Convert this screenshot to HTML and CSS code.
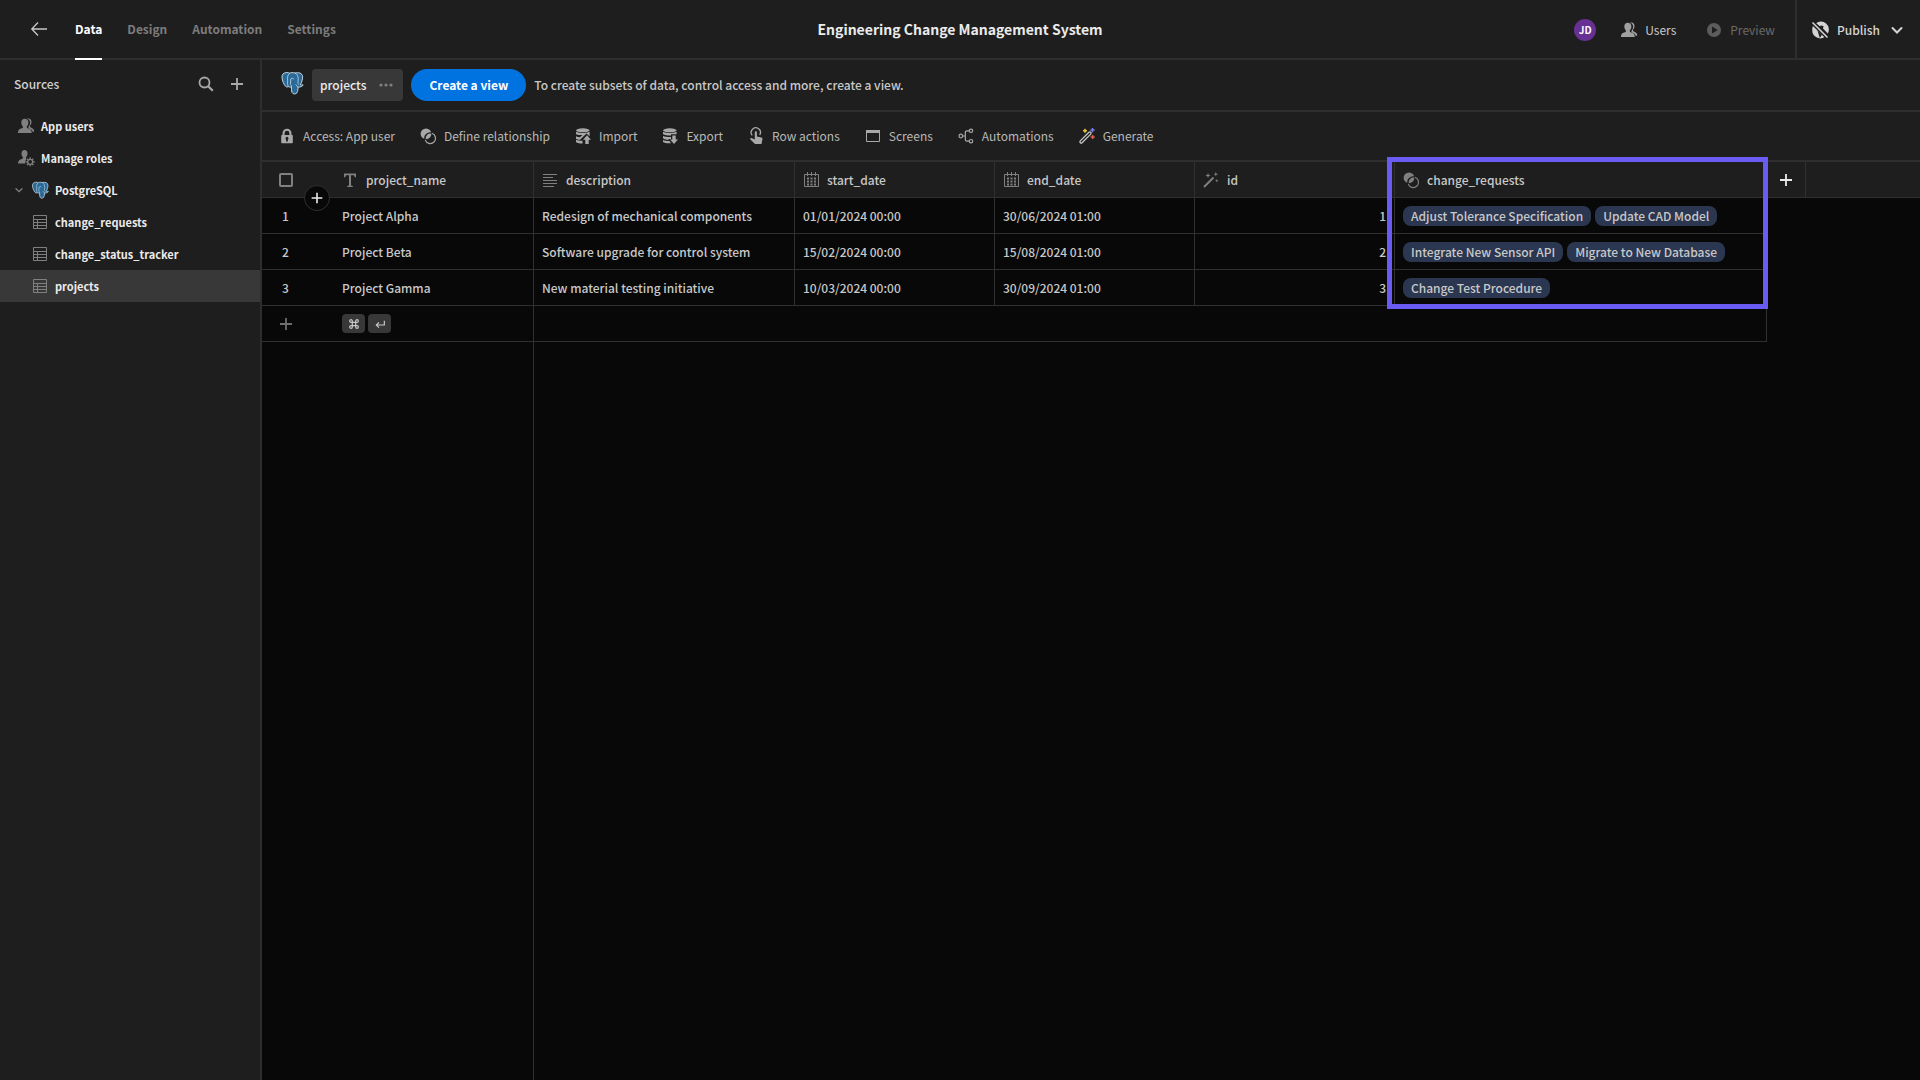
FILE: index.html
```html
<!DOCTYPE html>
<html lang="en">
<head>
    <meta charset="UTF-8">
    <meta name="viewport" content="width=device-width, initial-scale=1.0">
    <title>Engineering Change Management System</title>
    <link rel="stylesheet" href="styles.css">
</head>
<body>
    <!-- icon set -->
    <svg class="icon-defs" aria-hidden="true">
        <symbol id="i-back" viewBox="0 0 18 18"><path d="M17 9H2M8 2.5 1.8 9 8 15.5" fill="none" stroke="currentColor" stroke-width="1.3"/></symbol>
        <symbol id="i-search" viewBox="0 0 18 18"><circle cx="7.5" cy="7.5" r="5" fill="none" stroke="currentColor" stroke-width="1.8"/><path d="m11.2 11.2 4.6 4.6" stroke="currentColor" stroke-width="2.2"/></symbol>
        <symbol id="i-plus" viewBox="0 0 18 18"><path d="M9 3v12M3 9h12" stroke="currentColor" stroke-width="1.8"/></symbol>
        <symbol id="i-chevron" viewBox="0 0 18 18"><path d="m4.5 7 4.5 4.5L13.5 7" fill="none" stroke="currentColor" stroke-width="2" stroke-linecap="round"/></symbol>
        <symbol id="i-users" viewBox="0 0 18 18"><path d="M7.800 1.800C5.700 1.800 4.300 3.300 4.300 5.500c0 1.800.8 3 1.600 3.900.2 1-.1 1.600-.9 1.900C2.600 12.100 1 12.800 1 15.200V16h13.700v-.8c0-2.400-1.600-3.100-4-3.900-.8-.3-1.100-.9-.9-1.900.8-.9 1.600-2.100 1.600-3.900 0-2.200-1.400-3.700-3.600-3.700z" fill="currentColor"/><path d="M10 1.700c2.500-.9 4.500.5 4.500 3.200 0 1.700-.8 2.900-1.400 3.600-.2 1 .1 1.700.8 2 2 .8 3.300 1.600 3.300 4.200h-1.700c-.3-1.800-1.500-2.600-3.600-3.300-.6-.5-.7-1.200-.2-1.900.8-.9 1.400-2.100 1.400-3.900C13.100 3.700 12.100 2.300 10 1.700z" fill="currentColor"/></symbol>
        <symbol id="i-roles" viewBox="0 0 18 18"><path d="M7.500 1C5.600 1 4.500 2.400 4.500 4.500c0 1.700.7 2.900 1.400 3.600.1 1-.1 1.500-.8 1.800C2.500 10.600 1 11.500 1 14.500h7.300a5 5 0 0 1 1.200-4.400c-.5-.4-.6-1-.4-2 .8-.8 1.400-2 1.400-3.600C10.500 2.400 9.400 1 7.500 1z" fill="currentColor"/><circle cx="13.200" cy="12.800" r="2.500" fill="none" stroke="currentColor" stroke-width="1.3"/><path d="M13.200 8.300v1.800M13.200 15.500v1.800M8.700 12.800h1.800M15.900 12.800h1.800M10 9.600l1.300 1.300M15.100 14.700l1.300 1.300M16.400 9.600l-1.300 1.300M11.300 14.700 10 16" stroke="currentColor" stroke-width="1.3"/></symbol>
        <symbol id="i-table" viewBox="0 0 18 18"><path d="M2.500 2.500h13v13h-13zM2.500 6.500h13M2.500 9.500h13M2.500 12.500h13M6.500 6.500v9" fill="none" stroke="currentColor"/></symbol>
        <symbol id="i-postgres" viewBox="0 0 24 24">
            <path d="M2 6.500C1.700 3.600 3.500 1.800 6.200 1.600c1.500-.1 2.700.2 3.600.6 1-.5 2.300-.8 3.500-.5.7 0 1.300.1 1.800.3 3.300-.9 7.300.1 7.500 3.500.2 3-1.100 6.200-2.300 8.200.8.4 1.700.3 2.800.1-.3 1.500-2.400 2.400-5 2.300-.1 2.500-.3 4.300-1.200 5.700-1.100 1.500-3.900 1.600-4.900-.3-.6-1.500-.5-3.600-.6-5.600-1.200.4-2.500.2-3.200-.5-.8.8-1.800.8-2.700-.2C3.800 13.300 2.300 9.800 2 6.500z" fill="#2a6a99" stroke="#c9d8e2" stroke-width="1"/>
            <path d="M9.800 2.200C7.400 3.900 7.300 6.800 7.600 9.500c.2 2.200-.6 3.200.6 5.900M10.800 8c1.100-1 2.700-.9 3 .3M15.100 2c2.300 1.100 3.300 3.700 3.100 7-.1 2-.9 2.900.6 4.700M11.400 15.900c.8-1.300-.4-1.800-1-2.400l.4-5.500M15.700 13.500c.8 1 1.400 1.800 2.300 2.600" fill="none" stroke="#c9d8e2" stroke-width=".8"/>
        </symbol>
        <symbol id="i-dots" viewBox="0 0 18 18"><g fill="currentColor"><circle cx="4" cy="9" r="1.600"/><circle cx="9" cy="9" r="1.600"/><circle cx="14" cy="9" r="1.600"/></g></symbol>
        <symbol id="i-lock" viewBox="0 0 18 18"><path fill-rule="evenodd" d="M4.500 8V6.200a4.500 4.500 0 0 1 9 0V8h.5a.8.800 0 0 1 .8.800v6.700a.8.800 0 0 1-.8.800H4a.8.800 0 0 1-.8-.8V8.800A.8.800 0 0 1 4 8zm2.100 0h4.800V6.200a2.400 2.400 0 0 0-4.800 0zm3.300 4.600a1.500 1.500 0 1 0-1.800 0v1.900h1.800z" fill="currentColor"/></symbol>
        <symbol id="i-relation" viewBox="0 0 18 18"><circle cx="7" cy="6.800" r="5.400" fill="currentColor"/><path d="M12.900 6.200A5.300 5.300 0 0 0 6.200 12.900" fill="none" stroke="#1e1e1e" stroke-width="1.400"/><path d="M12.900 6.200A5.300 5.300 0 1 1 6.200 12.900" fill="none" stroke="currentColor" stroke-width="1.200"/></symbol>
        <symbol id="i-import" viewBox="0 0 18 18"><ellipse cx="8.800" cy="3.300" rx="6.800" ry="2" fill="currentColor"/><path d="M2 4.800c3.500 1.600 10 1.600 13.600 0v4.400L12.500 6.500 6 12.800c-1.800-.2-3-.5-4-1.100V9.300c1.200.6 2.400.8 3.900.9L8.500 8C6 8.200 3.600 7.900 2 7.200zM2 12.800c1.500.8 3.800 1 6.500 1v2.700c-3.200 0-6.500-.6-6.500-1.800z" fill="currentColor"/><path d="m13 8.300 4 4.400h-2.300V17h-3.400v-4.300H9z" fill="currentColor"/></symbol>
        <symbol id="i-export" viewBox="0 0 18 18"><ellipse cx="8.800" cy="3.300" rx="6.800" ry="2" fill="currentColor"/><path d="M2 4.800c3.500 1.600 10 1.600 13.600 0v2.500H10v1.200C6.700 8.500 3.600 8 2 7.200zM2 8.900c2.200 1 5.200 1.100 8 1v2H7.200l.9 1C5.800 12.800 3.200 12.100 2 11.200zM2 12.900c1.500.8 3.800 1 6.500 1l1.500 2.400c-4.200.3-8-.4-8-1.700z" fill="currentColor"/><path d="M11.300 8.500h3.400v4H17l-4 4.500-4-4.500h2.300z" fill="currentColor"/></symbol>
        <symbol id="i-hand" viewBox="0 0 18 18"><path d="M5.200 8.300a4.600 4.600 0 1 1 7.500-.4" fill="none" stroke="currentColor" stroke-width="1.3"/><path d="M7.800 5.300c0-1.500 2.100-1.500 2.100 0v4.200l4.500 1.100c.9.200 1.200.8 1 1.800L14.500 17H8L3.200 12.300c-.5-.6.3-1.600 1.200-1.300l3.400 1.600z" fill="currentColor"/></symbol>
        <symbol id="i-screen" viewBox="0 0 18 18"><path d="M2.500 3.500h13v11h-13z" fill="none" stroke="currentColor"/><path d="M2 3h14v3H2z" fill="currentColor"/></symbol>
        <symbol id="i-flow" viewBox="0 0 18 18"><g fill="none" stroke="currentColor" stroke-width="1.200"><circle cx="3.800" cy="9" r="1.800"/><circle cx="14" cy="3.800" r="1.700"/><circle cx="14" cy="14.200" r="1.700"/><path d="M5.700 9h2.600M12.200 3.800H10A1.700 1.700 0 0 0 8.300 5.500v7A1.700 1.700 0 0 0 10 14.200h2.200"/></g></symbol>
        <symbol id="i-generate" viewBox="0 0 18 18"><path d="M2.300 15.700c-.6-.6-.6-1.200 0-1.800l8.600-8.600c1.200-1.200 3 .6 1.800 1.800l-8.600 8.600c-.6.600-1.200.6-1.800 0z" fill="none" stroke="#c8c8c8" stroke-width="1.3"/><path d="M7 1.800v4M5 3.800h4" stroke="#e8c53a" stroke-width="1.5"/><path d="M14.500 1v4.200M12.400 3.100h4.200" stroke="#7b7bea" stroke-width="1.5"/><path d="M14.700 8v4M12.700 10h4" stroke="#e0604c" stroke-width="1.5"/></symbol>
        <symbol id="i-wand" viewBox="0 0 18 18"><path d="m2 16 9.500-9.500" stroke="currentColor" stroke-width="2"/><path d="m6 2 .7 1.800 1.800.7-1.800.7L6 7l-.7-1.800-1.800-.7 1.800-.7zM13.800 1l.6 1.600 1.600.6-1.600.6-.6 1.600-.6-1.600-1.600-.6 1.600-.6zM14.800 8l.5 1.300 1.300.5-1.300.5-.5 1.300-.5-1.300-1.300-.5 1.300-.5z" fill="currentColor"/></symbol>
        <symbol id="i-text" viewBox="0 0 18 18"><path d="M3 2.500h12v3.700h-1.200L13 4.200h-3v10.300l1.800.4V16H6.200v-1.100l1.800-.4V4.200H5l-.8 2H3z" fill="currentColor"/></symbol>
        <symbol id="i-lines" viewBox="0 0 18 18"><path d="M2 3.500h14M2 6.500h10M2 9.500h14M2 12.500h14M2 15.500h11" stroke="currentColor" stroke-width="1.200"/></symbol>
        <symbol id="i-calendar" viewBox="0 0 18 18"><path d="M2.500 3.500h14v12h-14zM5.500 1v4M9.500 1v4M13.500 1v4" fill="none" stroke="currentColor"/><path d="M5 7.500h9M5 10.500h9M5 13.500h9" stroke="currentColor" stroke-width="2" stroke-dasharray="2 1.500"/></symbol>
        <symbol id="i-play" viewBox="0 0 18 18"><path fill-rule="evenodd" d="M9 2a7 7 0 1 1 0 14A7 7 0 0 1 9 2zM7 5.500v7L12.700 9z" fill="currentColor"/></symbol>
        <symbol id="i-globe" viewBox="0 0 18 18"><path d="M5 2.200A8 8 0 0 1 16.800 12.500L12 7.500 12.500 5 9.500 4.500 9 5.500z" fill="currentColor"/><path d="M2 4.800 13.800 16A8 8 0 0 1 1.300 9 8 8 0 0 1 2 4.800z" fill="currentColor"/><path d="M6.500 9.500 11 13.800 8.800 17z" fill="#1e1e1e"/><path d="m1.500 1.500 15 15" stroke="#1e1e1e" stroke-width="4"/><path d="m1.500 1.500 15 15" stroke="currentColor" stroke-width="1.6"/></symbol>
        <symbol id="i-command" viewBox="0 0 18 18"><path d="M6.500 6.500h5v5h-5zM6.500 6.500h-2a2 2 0 1 1 2-2zM11.500 6.500v-2a2 2 0 1 1 2 2zM11.500 11.500h2a2 2 0 1 1-2 2zM6.500 11.500v2a2 2 0 1 1-2-2z" fill="none" stroke="currentColor" stroke-width="1.8"/></symbol>
        <symbol id="i-return" viewBox="0 0 18 18"><path d="M15.500 4v6.500H4M7.500 6.500l-4 4 4 4" fill="none" stroke="currentColor" stroke-width="1.8"/></symbol>
    </svg>

    <header class="topbar">
        <nav class="topnav">
            <a href="#" class="back" aria-label="Back"><svg class="icon"><use href="#i-back"/></svg></a>
            <a href="#" class="active">Data</a>
            <a href="#">Design</a>
            <a href="#">Automation</a>
            <a href="#">Settings</a>
        </nav>
        <h1 class="app-name">Engineering Change Management System</h1>
        <div class="top-actions">
            <span class="avatar">JD</span>
            <button type="button" class="top-button"><svg class="icon"><use href="#i-users"/></svg>Users</button>
            <button type="button" class="top-button" disabled><svg class="icon"><use href="#i-play"/></svg>Preview</button>
            <button type="button" class="publish"><svg class="icon"><use href="#i-globe"/></svg>Publish<svg class="icon chevron"><use href="#i-chevron"/></svg></button>
        </div>
    </header>

    <div class="workspace">
        <aside class="sidebar">
            <div class="sources">
                <h2>Sources</h2>
                <button type="button" aria-label="Search"><svg class="icon"><use href="#i-search"/></svg></button>
                <button type="button" aria-label="Add source"><svg class="icon"><use href="#i-plus"/></svg></button>
            </div>
            <nav class="tree">
                <a href="#"><svg class="icon"><use href="#i-users"/></svg>App users</a>
                <a href="#"><svg class="icon"><use href="#i-roles"/></svg>Manage roles</a>
                <a href="#" class="database"><svg class="arrow"><use href="#i-chevron"/></svg><svg class="icon"><use href="#i-postgres"/></svg>PostgreSQL</a>
                <a href="#" class="leaf"><svg class="icon"><use href="#i-table"/></svg>change_requests</a>
                <a href="#" class="leaf"><svg class="icon"><use href="#i-table"/></svg>change_status_tracker</a>
                <a href="#" class="leaf selected"><svg class="icon"><use href="#i-table"/></svg>projects</a>
            </nav>
        </aside>

        <main class="content">
            <div class="viewbar">
                <svg class="logo"><use href="#i-postgres"/></svg>
                <button type="button" class="view-tab">projects<svg class="icon"><use href="#i-dots"/></svg></button>
                <button type="button" class="create-view">Create a view</button>
                <p>To create subsets of data, control access and more, create a view.</p>
            </div>

            <div class="toolbar">
                <button type="button"><svg class="icon"><use href="#i-lock"/></svg>Access: App user</button>
                <button type="button"><svg class="icon"><use href="#i-relation"/></svg>Define relationship</button>
                <button type="button"><svg class="icon"><use href="#i-import"/></svg>Import</button>
                <button type="button"><svg class="icon"><use href="#i-export"/></svg>Export</button>
                <button type="button"><svg class="icon"><use href="#i-hand"/></svg>Row actions</button>
                <button type="button"><svg class="icon"><use href="#i-screen"/></svg>Screens</button>
                <button type="button"><svg class="icon"><use href="#i-flow"/></svg>Automations</button>
                <button type="button"><svg class="icon"><use href="#i-generate"/></svg>Generate</button>
            </div>

            <div class="grid">
                <table>
                    <colgroup>
                        <col class="col-gutter">
                        <col class="col-normal">
                        <col class="col-wide">
                        <col class="col-normal">
                        <col class="col-normal">
                        <col class="col-normal">
                        <col class="col-relation">
                        <col class="col-add">
                        <col>
                    </colgroup>
                    <thead>
                        <tr>
                            <th class="gutter">
                                <input type="checkbox" aria-label="Select all rows">
                                <button type="button" class="add-row" aria-label="Add row"><svg class="icon"><use href="#i-plus"/></svg></button>
                            </th>
                            <th><span class="head"><svg class="icon"><use href="#i-text"/></svg>project_name</span></th>
                            <th><span class="head"><svg class="icon"><use href="#i-lines"/></svg>description</span></th>
                            <th><span class="head"><svg class="icon"><use href="#i-calendar"/></svg>start_date</span></th>
                            <th><span class="head"><svg class="icon"><use href="#i-calendar"/></svg>end_date</span></th>
                            <th><span class="head"><svg class="icon"><use href="#i-wand"/></svg>id</span></th>
                            <th class="marked"><span class="head"><svg class="icon"><use href="#i-relation"/></svg>change_requests</span><span class="marker"></span></th>
                            <th class="add"><button type="button" aria-label="Add column"><svg class="icon"><use href="#i-plus"/></svg></button></th>
                            <th class="rest"></th>
                        </tr>
                    </thead>
                    <tbody>
                        <tr>
                            <td class="gutter">1</td>
                            <td>Project Alpha</td>
                            <td>Redesign of mechanical components</td>
                            <td>01/01/2024 00:00</td>
                            <td>30/06/2024 01:00</td>
                            <td class="number">1</td>
                            <td><div class="pills"><span>Adjust Tolerance Specification</span><span>Update CAD Model</span></div></td>
                        </tr>
                        <tr>
                            <td class="gutter">2</td>
                            <td>Project Beta</td>
                            <td>Software upgrade for control system</td>
                            <td>15/02/2024 00:00</td>
                            <td>15/08/2024 01:00</td>
                            <td class="number">2</td>
                            <td><div class="pills"><span>Integrate New Sensor API</span><span>Migrate to New Database</span></div></td>
                        </tr>
                        <tr>
                            <td class="gutter">3</td>
                            <td>Project Gamma</td>
                            <td>New material testing initiative</td>
                            <td>10/03/2024 00:00</td>
                            <td>30/09/2024 01:00</td>
                            <td class="number">3</td>
                            <td><div class="pills"><span>Change Test Procedure</span></div></td>
                        </tr>
                        <tr class="new-row">
                            <td class="gutter"><button type="button" aria-label="New row"><svg class="icon"><use href="#i-plus"/></svg></button></td>
                            <td><div class="keys"><kbd><svg><use href="#i-command"/></svg></kbd><kbd><svg><use href="#i-return"/></svg></kbd></div></td>
                            <td colspan="5"></td>
                        </tr>
                    </tbody>
                </table>
                <div class="below"></div>
            </div>
        </main>
    </div>
</body>
</html>
```
FILE: styles.css
```css
* {
    margin: 0;
    padding: 0;
    box-sizing: border-box;
}

body {
    min-height: 100vh;
    display: flex;
    flex-direction: column;
    background: #1e1e1e;
    color: #c8c8c8;
    font-family: "Noto Sans CJK SC", "Noto Sans", sans-serif;
    font-size: 12px;
    line-height: 20px;
}

a {
    color: inherit;
    text-decoration: none;
}

button {
    display: flex;
    align-items: center;
    background: none;
    border: none;
    color: inherit;
    font: inherit;
    cursor: pointer;
}

.icon-defs {
    display: none;
}

.icon {
    width: 18px;
    height: 18px;
    flex: none;
    display: block;
}

/* top bar */
.topbar {
    height: 60px;
    display: grid;
    grid-template-columns: 1fr auto 1fr;
    border-bottom: 2px solid #2e2e2e;
}

.topnav {
    display: flex;
    gap: 25px;
    padding-left: 30px;
    color: #7c7c7c;
    font-weight: 700;
}

.topnav a {
    display: flex;
    align-items: center;
    height: 60px;
    border-bottom: 2px solid transparent;
}

.topnav .back {
    color: #c8c8c8;
    margin-right: 2px;
}

.topnav .active {
    color: #fff;
    border-color: #fff;
}

.app-name {
    align-self: center;
    padding-bottom: 2px;
    font-size: 14px;
    font-weight: 700;
    color: #ebebeb;
}

.top-actions {
    display: flex;
    align-items: center;
    justify-content: flex-end;
}

.avatar {
    width: 22px;
    height: 22px;
    margin-right: 24px;
    border-radius: 50%;
    background: #673093;
    color: #fff;
    font-size: 10px;
    font-weight: 700;
    line-height: 22px;
    text-align: center;
}

.top-button {
    gap: 7px;
    margin-right: 29px;
}

.top-button .icon {
    color: #a0a0a0;
}

.top-button:disabled {
    margin-right: 20px;
    color: #6a6a6a;
}

.top-button:disabled .icon {
    color: #5c5c5c;
}

.publish {
    gap: 8px;
    height: 100%;
    padding: 0 14px;
    border-left: 2px solid #2e2e2e;
    color: #d4d4d4;
    font-weight: 500;
}

/* sidebar */
.workspace {
    flex: 1;
    display: flex;
}

.sidebar {
    width: 262px;
    flex: none;
    border-right: 2px solid #2e2e2e;
}

.sources {
    display: flex;
    align-items: center;
    gap: 13px;
    height: 48px;
    margin-bottom: 2px;
    padding: 0 14px;
    color: #a8a8a8;
}

.sources h2 {
    flex: 1;
    color: #d0d0d0;
    font-size: 12px;
    font-weight: 500;
}

.tree a {
    display: flex;
    align-items: center;
    gap: 6px;
    height: 32px;
    padding-left: 17px;
    color: #ebebeb;
    font-size: 11px;
    font-weight: 700;
}

.tree .icon {
    color: #808080;
}

.tree .database {
    padding-left: 13px;
}

.tree .arrow {
    width: 12px;
    height: 12px;
    color: #808080;
}

.tree .leaf {
    padding-left: 31px;
}

.tree .selected {
    background: #383838;
}

/* main area */
.content {
    flex: 1;
    min-width: 0;
    display: flex;
    flex-direction: column;
}

.viewbar {
    display: flex;
    align-items: center;
    gap: 8px;
    height: 52px;
    padding-left: 18px;
    border-bottom: 2px solid #2e2e2e;
    font-weight: 500;
}

.logo {
    width: 24px;
    height: 24px;
    margin-bottom: 4px;
}

.view-tab {
    gap: 11px;
    height: 32px;
    padding: 0 8px;
    border-radius: 4px;
    background: #383838;
    color: #ebebeb;
}

.view-tab .icon {
    color: #808080;
}

.create-view {
    height: 32px;
    padding: 0 18px;
    border-radius: 16px;
    background: #0073e0;
    color: #fff;
    font-weight: 700;
}

.toolbar {
    display: flex;
    align-items: center;
    gap: 24px;
    height: 50px;
    padding-left: 16px;
    border-bottom: 2px solid #2e2e2e;
    color: #b8b8b8;
}

.toolbar button {
    gap: 7px;
}

.toolbar .icon {
    color: #a8a8a8;
}

/* data grid */
.grid {
    flex: 1;
    display: flex;
    flex-direction: column;
    background: #080808;
}

table {
    width: 100%;
    table-layout: fixed;
    border-collapse: separate;
    border-spacing: 0;
    font-weight: 500;
}

.col-gutter {
    width: 72px;
}

.col-normal {
    width: 200px;
}

.col-wide {
    width: 261px;
}

.col-relation {
    width: 372px;
}

.col-add {
    width: 39px;
}

th,
td {
    height: 36px;
    padding: 0 8px;
    border-right: 1px solid #303030;
    border-bottom: 1px solid #303030;
    text-align: left;
    white-space: nowrap;
}

th {
    padding: 0 7px;
    background: #1e1e1e;
    font-weight: 500;
}

.head {
    display: flex;
    align-items: center;
    gap: 7px;
}

.head .icon {
    color: #808080;
}

.gutter {
    position: relative;
    padding-left: 17px;
    border-right: none;
}

td.gutter {
    padding-left: 20px;
}

.gutter input {
    display: block;
    width: 14px;
    height: 14px;
    appearance: none;
    border: 2px solid #808080;
    border-radius: 2px;
}

.add-row {
    position: absolute;
    right: 4px;
    bottom: -14px;
    z-index: 1;
    width: 26px;
    height: 26px;
    justify-content: center;
    border: 1px solid #303030;
    border-radius: 50%;
    background: #080808;
    color: #ebebeb;
}

.add-row .icon {
    width: 16px;
    height: 16px;
}

.marked {
    position: relative;
}

/* frame round the relationship column, header and three rows */
.marker {
    position: absolute;
    top: -5px;
    left: -8px;
    right: -2px;
    height: 152px;
    z-index: 2;
    border: 5px solid #6a5cf2;
    pointer-events: none;
}

.add {
    padding: 0 10px;
    color: #ebebeb;
}

.rest {
    border-right: none;
}

.number {
    text-align: right;
}

.pills {
    display: flex;
    gap: 4px;
}

.pills span {
    height: 20px;
    padding: 0 8px;
    border-radius: 8px;
    background: #2b3650;
}

.new-row .gutter {
    padding-left: 15px;
    color: #6e6e6e;
}

.keys {
    display: flex;
    gap: 3px;
}

.keys kbd {
    display: flex;
    align-items: center;
    justify-content: center;
    width: 23px;
    height: 19px;
    border-radius: 4px;
    background: #383838;
}

.keys svg {
    width: 12px;
    height: 12px;
}

.below {
    flex: 1;
    width: 272px;
    border-right: 1px solid #303030;
}
```
